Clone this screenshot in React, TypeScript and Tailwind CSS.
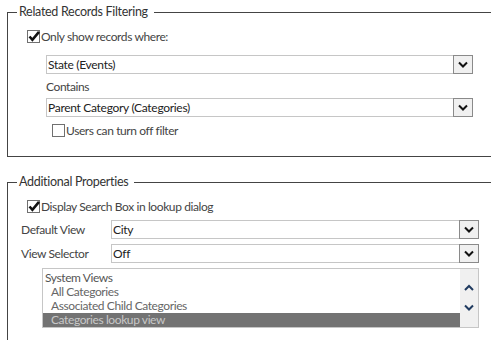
import React from "react";

const font = { fontFamily: "Lato, 'Noto Sans', sans-serif" };

function Chevron({ up = false, className = "" }: { up?: boolean; className?: string }) {
  return (
    <svg width="10" height="7" viewBox="0 0 10 7" className={className}>
      <path d={up ? "M1 6 L5 2 L9 6" : "M1 1.5 L5 5.5 L9 1.5"} fill="none" stroke="currentColor" strokeWidth="2" />
    </svg>
  );
}

function Select({ value, className = "" }: { value: string; className?: string }) {
  return (
    <div className={`flex h-[19px] border border-[#c6c6c6] bg-white ${className}`}>
      <div className="flex-1 pl-[1px] text-[12px] leading-[17px] tracking-[-0.3px] text-[#222]">{value}</div>
      <div className="-my-[1px] -mr-[1px] flex h-[19px] w-[20px] items-center justify-center border border-[#8a8a8a] bg-[#f0f0f0] text-[#111]">
        <Chevron />
      </div>
    </div>
  );
}

function Check({ checked, label, className = "" }: { checked: boolean; label: string; className?: string }) {
  return (
    <div className={`flex h-[13px] items-center ${className}`}>
      <div className="relative h-[13px] w-[13px] border border-[#707070] bg-white">
        {checked && (
          <svg width="14" height="14" viewBox="0 0 14 14" className="absolute -left-[1px] -top-[2px]">
            <path d="M2.5 7.5 L5.4 10.8 L12 2.8" fill="none" stroke="#111" strokeWidth="2.6" />
          </svg>
        )}
      </div>
      <span className="ml-[1px] text-[12px] leading-[16px] tracking-[-0.4px] text-[#444]">{label}</span>
    </div>
  );
}

export default function App() {
  return (
    <div className="h-[340px] w-[491px] overflow-hidden bg-white" style={font}>
      <fieldset className="ml-[7px] mt-[4px] h-[153px] border-y border-l border-[#444]">
        <legend className="ml-[9px] pl-[2px] pr-[6px] text-[12.5px] leading-[16px] tracking-[-0.3px] text-[#333]">Related Records Filtering</legend>
        <Check checked label="Only show records where:" className="ml-[19px] mt-[10px]" />
        <Select value="State (Events)" className="ml-[38px] mt-[12px] w-[427px]" />
        <div className="ml-[38px] mt-[5px] text-[12px] leading-[16px] tracking-[-0.4px] text-[#444]">Contains</div>
        <Select value="Parent Category (Categories)" className="ml-[38px] mt-[3px] w-[427px]" />
        <Check checked={false} label="Users can turn off filter" className="ml-[44px] mt-[7px]" />
      </fieldset>

      <fieldset className="ml-[7px] mt-[17px] h-[200px] border-l border-t border-[#444]">
        <legend className="ml-[9px] pl-[2px] pr-[6px] text-[12.5px] leading-[16px] tracking-[-0.3px] text-[#333]">Additional Properties</legend>
        <Check checked label="Display Search Box in lookup dialog" className="ml-[19px] mt-[10px]" />
        <div className="mt-[7px] flex items-center">
          <div className="w-[103px] pl-[13px] text-[12px] leading-[16px] tracking-[-0.4px] text-[#444]">Default View</div>
          <Select value="City" className="w-[368px]" />
        </div>
        <div className="mt-[5px] flex items-center">
          <div className="w-[103px] pl-[13px] text-[12px] leading-[16px] tracking-[-0.4px] text-[#444]">View Selector</div>
          <Select value="Off" className="w-[368px]" />
        </div>
        <div className="ml-[34px] mt-[5px] flex h-[60px] w-[437px] border border-[#c6c6c6] bg-white">
          <div className="flex-1 pt-[2px] text-[12px] tracking-[-0.4px]">
            <div className="h-[13px] pl-[2px] leading-[13px] text-[#555]">System Views</div>
            <div className="h-[15px] pl-[8px] leading-[15px] text-[#666]">All Categories</div>
            <div className="h-[14px] pl-[8px] leading-[14px] text-[#666]">Associated Child Categories</div>
            <div className="h-[14px] bg-[#737373] pl-[8px] leading-[14px] text-[#c8c8c8]">Categories lookup view</div>
          </div>
          <div className="flex w-[18px] flex-col items-center bg-[#f0f0f0] pt-[15px] text-[#1f3a5f]">
            <Chevron up />
            <Chevron className="mt-[13px]" />
          </div>
        </div>
      </fieldset>
    </div>
  );
}
